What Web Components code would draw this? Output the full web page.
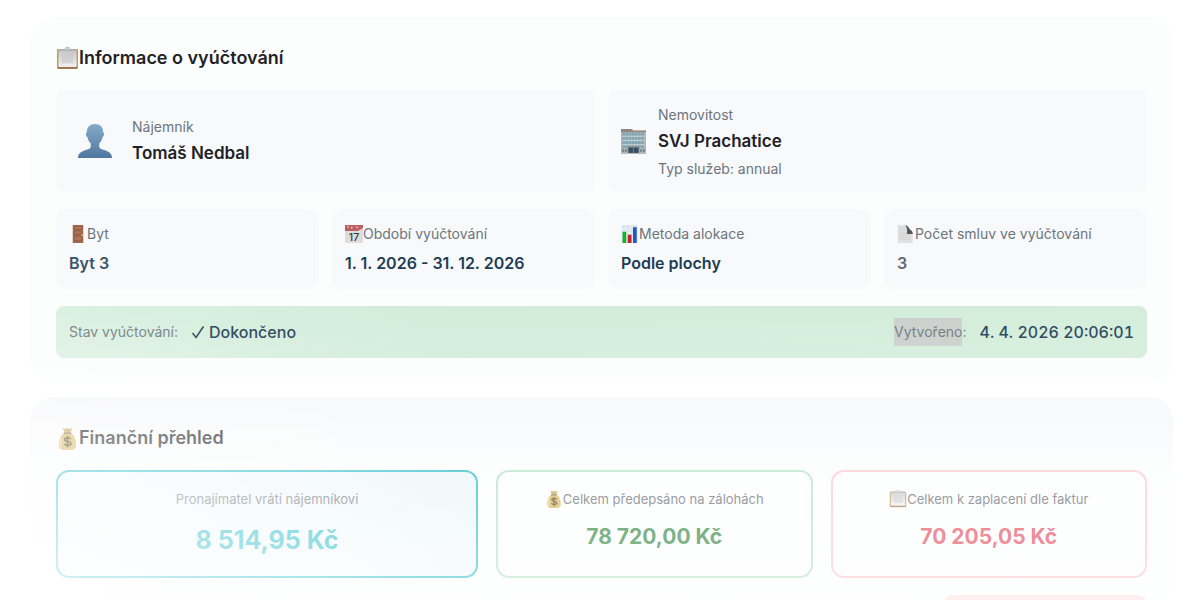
<!DOCTYPE html>
<html lang="cs">
<head>
<meta charset="utf-8">
<title>Vyúčtování</title>
<style>
  html, body {
    height: 100%;
    margin: 0;
  }
  body {
    font-family: Inter, "Liberation Sans", sans-serif;
    font-size: 14px;
    color: #1f2226;
    background: #fff;
    overflow: hidden;
  }
  mark {
    display: inline-block;
    background: #c9cfca;
    color: inherit;
  }
</style>
</head>
<body>
<billing-page>
  <billing-panel>
    <emoji-icon slot="icon" name="clipboard"></emoji-icon>
    <span slot="title">Informace o vyúčtování</span>
    <card-row columns="1fr 1fr">
      <party-card wide>
        <emoji-icon slot="icon" name="person"></emoji-icon>
        <span slot="label">Nájemník</span>
        Tomáš Nedbal
      </party-card>
      <party-card>
        <emoji-icon slot="icon" name="building"></emoji-icon>
        <span slot="label">Nemovitost</span>
        SVJ Prachatice
        <span slot="note">Typ služeb: annual</span>
      </party-card>
    </card-row>
    <card-row columns="repeat(4, 1fr)">
      <info-card style="--value: #385469">
        <emoji-icon slot="icon" name="door"></emoji-icon>
        <span slot="label">Byt</span>
        Byt 3
      </info-card>
      <info-card>
        <emoji-icon slot="icon" name="calendar"></emoji-icon>
        <span slot="label">Období vyúčtování</span>
        1. 1. 2026 - 31. 12. 2026
      </info-card>
      <info-card>
        <emoji-icon slot="icon" name="chart"></emoji-icon>
        <span slot="label">Metoda alokace</span>
        Podle plochy
      </info-card>
      <info-card style="--value: #5c6873">
        <emoji-icon slot="icon" name="page"></emoji-icon>
        <span slot="label">Počet smluv ve vyúčtování</span>
        3
      </info-card>
    </card-row>
    <status-bar>
      <span slot="state-label">Stav vyúčtování:</span>
      <span slot="state">Dokončeno</span>
      <span slot="created-label"><mark>Vytvořeno</mark>:</span>
      <span slot="created">4. 4. 2026 20:06:01</span>
    </status-bar>
  </billing-panel>

  <billing-panel faded>
    <emoji-icon slot="icon" name="money"></emoji-icon>
    <span slot="title">Finanční přehled</span>
    <card-row columns="4fr 3fr 3fr" spaced>
      <amount-card tone="cyan">
        <span slot="label">Pronajímatel vrátí nájemníkovi</span>
        8 514,95 Kč
      </amount-card>
      <amount-card tone="green">
        <emoji-icon slot="icon" name="money"></emoji-icon>
        <span slot="label">Celkem předepsáno na zálohách</span>
        78 720,00 Kč
      </amount-card>
      <amount-card tone="red">
        <emoji-icon slot="icon" name="clipboard"></emoji-icon>
        <span slot="label">Celkem k zaplacení dle faktur</span>
        70 205,05 Kč
      </amount-card>
    </card-row>
    <card-row columns="repeat(5, 1fr)" spaced>
      <mini-card></mini-card>
      <mini-card></mini-card>
      <mini-card></mini-card>
      <mini-card></mini-card>
      <mini-card alert></mini-card>
    </card-row>
  </billing-panel>
</billing-page>

<script>
(function () {
  'use strict';

  function define(selector, style, template, connected) {
    var $template = document.createElement('template');
    $template.innerHTML = '<style>' + style + '</style>' + template;
    customElements.define(selector, class extends HTMLElement {
      constructor() {
        super();
        this.attachShadow({ mode: 'open' }).appendChild(document.importNode($template.content, true));
      }
      connectedCallback() {
        if (connected) {
          connected.call(this);
        }
      }
    });
  }

  var icons = {
    clipboard: '<linearGradient id="g" x1="0" y1="0" x2="0" y2="1"><stop offset="0" stop-color="#c4c5c8"/><stop offset="1" stop-color="#f2f2f3"/></linearGradient>' +
      '<rect x="1" y="2" width="22" height="21" rx="1.5" fill="#c39a5f"/><path d="M2 21.800h20" stroke="#94704a" stroke-width="1.6"/>' +
      '<rect x="2.600" y="3" width="18.800" height="17.800" fill="url(#g)"/><rect x="6" y="7" width="12" height="10" fill="#c9c9cb" opacity=".7"/>' +
      '<path d="M3.500 4V3q0-1 1.500-1H9q.5-2 3-2t3 2h4q1.500 0 1.500 1v1z" fill="#a9adb5"/><path d="M9.500 2h5" stroke="#e4e7ed"/>',
    person: '<linearGradient id="g" x1="0" y1="0" x2="0" y2="1"><stop offset="0" stop-color="#86abc9"/><stop offset="1" stop-color="#50779f"/></linearGradient>' +
      '<path fill="url(#g)" d="M12 0C8.300 0 6.200 2.400 6.200 6c-1 .3-.6 2.800.5 3.300.4 2 1.200 3.300 2.300 4.300v2.300c0 1.400-1.500 1.800-3.400 2.400C2.300 19.400 0 20.500 0 24h24c0-3.500-2.300-4.600-5.600-5.700-1.900-.6-3.400-1-3.400-2.400v-2.300c1.100-1 1.900-2.300 2.300-4.300 1.100-.5 1.500-3 .5-3.300C17.800 2.400 15.700 0 12 0z"/>',
    building: '<path d="M0 1h24v22H0z" fill="#b3b5b3"/><path d="M0 0h11v2h13v1H0z" fill="#92857f"/>' +
      '<path d="M1.500 5h21M1.500 9h21M1.500 13h21M1.500 17h21" stroke="#7ba5b8" stroke-width="2.800" stroke-dasharray="2.200 .8"/>' +
      '<path d="M1.500 7h21M1.500 11h21M1.500 15h21" stroke="#c8d6d9" stroke-width=".8"/>' +
      '<path d="M7 17.500h10V23H7z" fill="#375163"/><path d="M6.500 17.500h11M12 18v5" stroke="#83766f"/><path d="M1 20.800h5M18 20.800h5" stroke="#647f8f" stroke-width="2.200" stroke-dasharray="2 1"/><path d="M0 23.500h24" stroke="#b8b9b8"/>',
    door: '<path d="M5 0h14v24H5z" fill="#a06a51"/><path d="M7 2h10v4H7zM7 8h10v4H7zM7 15h10v6H7z" fill="#b17456" stroke="#8c563f" stroke-width=".8"/><circle cx="17.500" cy="13.500" r="1.200" fill="#e6bd64"/>',
    calendar: '<path d="M0 1h24v23H0z" fill="#dedddb"/><path d="M0 0h24v8H0z" fill="#bd6061"/><path d="M3 3l2-1M9 5V2M15 2l2 2" stroke="#e7b1b0" stroke-width="2"/><path d="M17 8l7-4v4z" fill="#edd0ce"/>' +
      '<text x="12" y="21" font-family="Inter, sans-serif" font-size="14" font-weight="500" text-anchor="middle" fill="#373737">17</text>',
    chart: '<path d="M1 0h21v24H1z" fill="#dce4ed"/><path d="M1 5h21M1 10h21M1 15h21M6 0v24M12 0v24" stroke="#edf2f7"/><path d="M2 9h5v15H2z" fill="#10b52c"/><path d="M9 13h5v11H9z" fill="#c51f32"/><path d="M16 3h5v21h-5z" fill="#1e5dbc"/>',
    page: '<path d="M1 0h11l9 9v15H1z" fill="#e1e1e1"/><path d="M3 4h8M3 7h8M3 10h9M3 13h15M3 16h15M3 19h15" stroke="#cfcfcf"/><path d="M11 0c3 1 5 3 6 6 2 1 4 2 4 6h-8c1-4 .5-8-2-12z" fill="#565758"/>',
    money: '<path d="M7 1l3 1 2-1 2 1 3-1-2 5H9z" fill="#c9a354"/><path d="M9 6h6c5 3 6 9 6 13 0 3-2 5-5 5H8c-3 0-5-2-5-5 0-4 1-10 6-13z" fill="#d9b45b"/><path d="M8 6.500h8" stroke="#8c713f" stroke-width="1.800"/><path d="M6 12q-2 6-1 9" fill="none" stroke="#f2d991" stroke-width="1.500"/>' +
      '<path d="M15.500 12.500c-1-1.600-6.500-2-6.500.6 0 2.800 6.600 1.300 6.600 4.200 0 2.700-5.800 2.500-7 .4M12 9.500v12" fill="none" stroke="#4f431f" stroke-width="1.700"/>'
  };

  define('emoji-icon', `
    :host { display: block; flex: none; width: var(--icon, 18px); height: var(--icon, 18px); }
    svg { display: block; width: 100%; height: 100%; }
  `, '<svg viewBox="0 0 24 24" aria-hidden="true"></svg>', function () {
    this.shadowRoot.querySelector('svg').innerHTML = icons[this.getAttribute('name')];
  });

  // the veil washes the lower left of the page out towards white
  define('billing-page', `
    :host { display: block; position: relative; height: 100%; overflow: hidden; }
    main { display: flex; flex-direction: column; gap: 15px; padding: 17px 27px 0 30px; }
    .veil {
      position: absolute; inset: 0; pointer-events: none;
      background:
        radial-gradient(ellipse 44% 50% at 0 100%, rgba(255,255,255,.7), rgba(255,255,255,.3) 60%, rgba(255,255,255,0)),
        linear-gradient(to bottom, rgba(255,255,255,0) 48%, rgba(255,255,255,.28) 74%, rgba(255,255,255,.48));
    }
  `, '<main><slot></slot></main><div class="veil"></div>');

  define('billing-panel', `
    :host { display: block; border-radius: 24px; background: #fcfefd; }
    :host([faded]) { background: linear-gradient(#f5f7f9, #fbfcfc 72px, #fdfefe 100px, #fff); }
    section { display: flex; flex-direction: column; gap: 17px; padding: 26px 26px 24px; }
    h2 {
      display: flex; align-items: center; margin: 0;
      font-size: 18px; line-height: 30px; font-weight: 600;
      --icon: 23px;
    }
    :host([faded]) h2 { color: #101214; }
  `, '<section><h2><slot name="icon"></slot><slot name="title"></slot></h2><slot></slot></section>');

  define('card-row', `
    :host { display: grid; gap: 13px; }
    :host([spaced]) { gap: 18px; }
  `, '<slot></slot>', function () {
    this.style.gridTemplateColumns = this.getAttribute('columns');
  });

  define('party-card', `
    :host {
      display: flex; align-items: center; gap: 12px; min-height: 82px; padding: 10px 13px;
      border-radius: 8px; background: #f8f9fb; line-height: 27px; --icon: 25px;
    }
    :host([wide]) { --icon: 34px; }
    .icon { display: flex; justify-content: center; min-width: 25px; }
    :host([wide]) .icon { min-width: 51px; }
    :host([wide]) .text { padding-bottom: 3px; }
    .label, .note { display: block; color: #6c757d; }
    .value { display: block; font-size: 17px; font-weight: 600; }
  `, `<div class="icon"><slot name="icon"></slot></div>
    <div class="text">
      <span class="label"><slot name="label"></slot></span>
      <strong class="value"><slot></slot></strong>
      <span class="note"><slot name="note"></slot></span>
    </div>`);

  define('info-card', `
    :host { display: block; padding: 10px 13px 11px; border-radius: 10px; background: #f8f9fb; }
    .label { display: flex; align-items: center; line-height: 29px; color: #6c757d; }
    .value { display: block; font-size: 16px; line-height: 30px; font-weight: 600; color: var(--value, #1d3d55); }
  `, `<span class="label"><slot name="icon"></slot><slot name="label"></slot></span>
    <strong class="value"><slot></slot></strong>`);

  define('status-bar', `
    :host {
      display: flex; justify-content: space-between; align-items: center; padding: 12px 13px;
      border-radius: 8px; line-height: 28px;
      background: linear-gradient(80deg, #d9f0df, #d1ecd9 35%, #d3edda);
    }
    div { display: flex; align-items: center; gap: 13px; }
    .label { color: #6c757d; }
    .value {
      display: flex; align-items: center; gap: 4px;
      font-size: 16px; font-weight: 500; font-variant-numeric: tabular-nums; color: #1d3d55;
    }
    svg { width: 14px; height: 14px; }
  `, `<div>
      <span class="label"><slot name="state-label"></slot></span>
      <span class="value"><svg viewBox="0 0 14 14" aria-hidden="true"><path d="M1.500 8l3.500 4.500L12.500 1.500" fill="none" stroke="currentColor" stroke-width="1.500"/></svg><slot name="state"></slot></span>
    </div>
    <div>
      <span class="label"><slot name="created-label"></slot></span>
      <span class="value"><slot name="created"></slot></span>
    </div>`);

  define('amount-card', `
    :host {
      display: block; padding: 16px 16px 14px; border: 2px solid; border-radius: 13px;
      text-align: center; background: #fdfefe;
    }
    :host([tone=cyan]) { border-color: #22bac5; background: linear-gradient(200deg, #eaf5f8, #f6fcfd); color: #08b4c0; }
    :host([tone=green]) { border-color: #b4e2c3; color: #298038; }
    :host([tone=red]) { border-color: #fdc6cc; color: #e14658; }
    .label {
      display: flex; justify-content: center; align-items: center; margin-bottom: 8px;
      font-size: 13px; line-height: 22px; color: #5f6870;
    }
    .value { display: block; font-size: 21px; line-height: 37px; font-weight: 700; }
    :host([tone=cyan]) .value { font-size: 25px; line-height: 44px; }
  `, `<span class="label"><slot name="icon"></slot><slot name="label"></slot></span>
    <strong class="value"><slot></slot></strong>`);

  define('mini-card', `
    :host { display: block; height: 80px; border-radius: 10px; background: #fdfefe; }
    :host([alert]) { background: #fde0e3; }
  `, '');
}());
</script>
</body>
</html>
